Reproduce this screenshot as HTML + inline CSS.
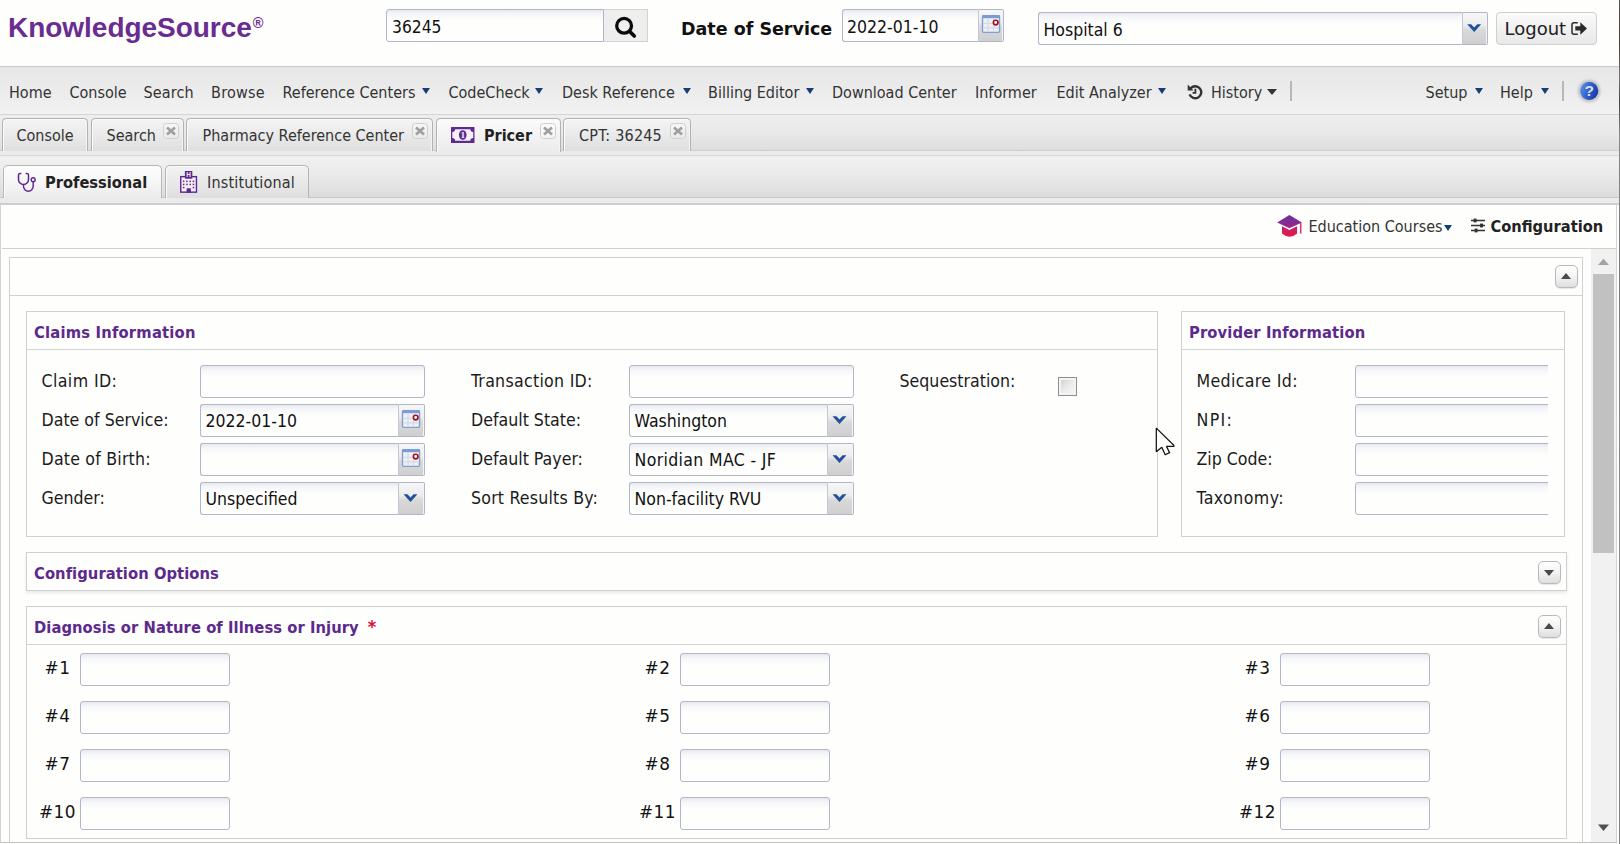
<!DOCTYPE html>
<html lang="en">
<head>
<meta charset="utf-8">
<title>KnowledgeSource - Pricer</title>
<style>
*{box-sizing:border-box;margin:0;padding:0}
html,body{width:1620px;height:844px;overflow:hidden;background:#fefefd}
body{position:relative;font-family:"DejaVu Sans Condensed","Liberation Sans",sans-serif;color:#333;font-size:16px}
.a{position:absolute;white-space:nowrap}
/* header */
#logo{left:8px;top:11px;font:bold 28px/34px "Liberation Sans",sans-serif;color:#6a2c91;letter-spacing:-.030px}
#logo sup{font-size:14.5px;font-weight:bold;position:relative;top:2px;left:1px;vertical-align:top;line-height:20px;letter-spacing:0}
.inp{position:absolute;height:33px;border:1px solid #b3b6ca;border-radius:3px;background:#fefefd linear-gradient(#e7e9ee 0,#f5f6f8 4px,#fefefd 11px);font:17.5px/31px "DejaVu Sans Condensed","Liberation Sans",sans-serif;color:#111;padding-left:4.500px;padding-top:1px;white-space:nowrap;overflow:hidden}
.inp.t{border-radius:3px 0 0 3px;border-right-color:#c4c6d6}
.trg{position:absolute;width:26px;height:33px;border:1px solid #b3b6ca;border-left:0;border-radius:0 2px 2px 0;background:linear-gradient(#f7f7f7 0,#ececec 40%,#d9d9d9 55%,#cfcfcf 100%);box-shadow:inset -1px 0 0 #f4f4f4}
.trg svg{position:absolute;left:0;top:0}
#hdrline{left:0;top:66px;width:1619px;height:1px;background:#c9c9c9}
/* nav */
#nav{left:0;top:67px;width:1619px;height:48px;background:linear-gradient(#e7e7e7 0,#ebebeb 45%,#f2f2f2 100%);border-bottom:1px solid #d4d4d4}
.n{position:absolute;top:82px;font-size:16px;line-height:22px;color:#333;white-space:nowrap}
.ar{position:absolute;top:88px;width:0;height:0;border-left:4.700px solid transparent;border-right:4.700px solid transparent;border-top:6.400px solid #153e72}
.sep{position:absolute;top:81px;width:1.500px;height:20px;background:#b9b7b0}
/* tab strips */
#ts1{left:0;top:115px;width:1619px;height:36px;background:linear-gradient(#eeeeee 0,#e9e9e9 50%,#dedede 100%);border-bottom:1px solid #cfcfcf}
#ts1b{left:0;top:151px;width:1619px;height:5px;background:#ebebeb;border-bottom:1px solid #d6d6d6}
#ts2{left:0;top:156px;width:1619px;height:42px;background:linear-gradient(#f1f1f1 0,#e9e9e9 50%,#dcdcdc 100%);border-bottom:1px solid #c8c8c8}
#ts2b{left:0;top:198px;width:1619px;height:7px;background:#ebebeb;border-bottom:2px solid #cdcdcd}
.tab{position:absolute;top:118px;height:33px;border:1px solid #b2b2b2;border-bottom:0;border-radius:4.500px 4.500px 0 0;background:linear-gradient(#f4f4f4 0,#ebebeb 45%,#dfdfdf 100%);box-shadow:inset 1px 1px 0 #fbfbfb,inset -1px 0 0 #f4f4f4;font-size:16px;line-height:22px;color:#333}
.tab.on{background:linear-gradient(#fbfbfb 0,#f3f3f3 50%,#ebebeb 100%);height:34px;font-weight:bold;color:#222}
.tab span{position:absolute;top:6px;margin-left:1px;white-space:nowrap}
.x{position:absolute;top:4px;width:16px;height:16px;margin-left:0;border:1px solid #cfcfcf;border-radius:3.500px;background:linear-gradient(rgba(255,255,255,.35),rgba(255,255,255,.1))}
.x svg{position:absolute;left:0;top:0}
.stab{position:absolute;top:165px;height:33px;border:1px solid #b4b4b4;border-bottom:0;border-radius:5px 5px 0 0;background:linear-gradient(#f2f2f2 0,#e9e9e9 50%,#dedede 100%);box-shadow:inset 1px 1px 0 #fafafa;font-size:16px;line-height:22px;color:#333}
.stab.on{background:linear-gradient(#fdfdfd 0,#f6f6f6 50%,#ebebeb 100%);height:33px;font-weight:bold;color:#222;border-color:#b8b8b8}
.stab span{position:absolute;top:6px;white-space:nowrap}

/* content */
#cleft{left:0;top:204px;width:1px;height:639px;background:#d2d2d2}
#cbot{left:0;top:842px;width:1619px;height:1px;background:#c2c2c2}
#tbline{left:2px;top:248px;width:1615px;height:1px;background:#d0d0d0}
.tb{position:absolute;top:216px;font-size:16px;line-height:22px;color:#333;white-space:nowrap}
#panel{left:9px;top:257px;width:1574px;height:585px;border:1px solid #d0d0d0;border-bottom:0;background:#fefefd}
#phdr{left:10px;top:295px;width:1572px;height:1px;background:#d0d0d0}
.tool{position:absolute;width:23px;height:23px;border:1px solid #b9b9b9;border-radius:5px;background:linear-gradient(#ffffff,#f3f3f3 50%,#dedede);box-shadow:0 1px 1px #e6e6e6}
.tool i{position:absolute;left:5px;width:0;height:0;border-left:5.500px solid transparent;border-right:5.500px solid transparent}
.tool i.up{top:7px;border-bottom:6px solid #4a4a4a}
.tool i.dn{top:8px;border-top:6px solid #4a4a4a}
.fs{position:absolute;border:1px solid #d0d0d0;background:#fefefd}
.fs .ttl{position:absolute;left:7px;top:10px;letter-spacing:.06px;font:bold 16.4px/22px "DejaVu Sans Condensed","Liberation Sans",sans-serif;color:#5c2a8c;white-space:nowrap}
.fs .ul{position:absolute;left:0;right:0;top:37px;height:1px;background:#d3d3d3}
.lb{position:absolute;font:17.6px/24px "DejaVu Sans Condensed","Liberation Sans",sans-serif;color:#1a1a1a;white-space:nowrap}
.dl{position:absolute;width:45px;text-align:center;letter-spacing:.5px;font:16.900px/24px "DejaVu Sans","Liberation Sans",sans-serif;color:#111;white-space:nowrap}
.dinp{width:150px;padding:0}
.cb{position:absolute;width:19px;height:19px;border:1px solid #8e8e8e;background:linear-gradient(135deg,#d2d2d2 10%,#ebebeb 50%,#f6f6f6 90%);box-shadow:inset 0 0 0 2px #f4f4f4}
/* scrollbar */
#sb{left:1591px;top:249px;width:25px;height:593px;background:#f1f1f1}
#sbth{left:1593px;top:274px;width:21px;height:279px;background:#c1c1c1}
</style>
</head>
<body>
<!-- ===== header ===== -->
<div class="a" id="logo">KnowledgeSource<sup>®</sup></div>
<div class="inp" style="left:386px;top:9px;width:218px;border-radius:3px 0 0 3px;padding-top:2px;padding-left:5px;font-size:17.300px">36245</div>
<div class="a" id="sbtn" style="left:604px;top:9px;width:44px;height:33px;background:#eeeeee;border:1px solid #d3d3d3;border-left:0">
<svg width="44" height="33" viewBox="0 0 44 33"><circle cx="20.100" cy="15.800" r="7.400" fill="none" stroke="#0a0a0a" stroke-width="3.300"/><path d="M25.600 21.400L30.300 26" stroke="#0a0a0a" stroke-width="3.600" stroke-linecap="round"/></svg>
</div>
<div class="a" style="left:681px;top:16.500px;font:bold 17.500px/24px 'DejaVu Sans','Liberation Sans',sans-serif;color:#111">Date of Service</div>
<div class="inp t" style="left:842px;top:9px;width:137px;padding-top:2px;padding-left:4px">2022-01-10</div>
<div class="trg" style="left:979px;top:9px;width:25px"><svg width="25" height="33" viewBox="0 0 25 33"><rect x="3.500" y="5.600" width="17" height="16.800" rx="1.300" fill="#eef0f5" stroke="#7f9fd6" stroke-width="1.400"/><rect x="3.300" y="5" width="17.400" height="3.200" fill="#7b9bd4"/><path d="M9 9V22M14.500 9V22M4.200 13.400H19.800M4.200 17.800H19.800" stroke="#d5d9e6" stroke-width="1.200"/><circle cx="16.700" cy="12.500" r="2.300" fill="#fff" stroke="#a30f14" stroke-width="1.650"/></svg></div>
<div class="inp t" style="left:1038px;top:12px;width:425px;padding-top:2px">Hospital 6</div>
<div class="trg" style="left:1463px;top:12px;width:25px"><svg width="25" height="33" viewBox="0 0 25 33"><g transform="translate(-1.800 0)"><path d="M6 11.300H9.900L13 14.600L16.100 11.300H20L13 18.900Z" fill="#23509b"/></g></svg></div>
<div class="a" id="logout" style="left:1496px;top:12px;width:101px;height:33px;border:1px solid #cfcfcf;border-radius:4px;background:linear-gradient(#fbfbfb,#f1f1f1 50%,#e9e9e9);font:18px/32px 'DejaVu Sans','Liberation Sans',sans-serif;color:#222;padding-left:7.500px">Logout
<svg class="a" style="left:74px;top:9px" width="17" height="14" viewBox="0 0 17 14"><path d="M6.800 .800H3Q1 .800 1 2.800V10.200Q1 12.200 3 12.200H6.800" fill="none" stroke="#2a2a2a" stroke-width="1.500"/><path d="M4.300 4.200H9.300V.300L16 6.400L9.300 12.700V8.600H4.300Z" fill="#2a2a2a"/></svg>
</div>
<div class="a" id="hdrline"></div>

<!-- ===== nav ===== -->
<div class="a" id="nav"></div>
<div class="n" style="left:9px">Home</div>
<div class="n" style="left:69.5px">Console</div>
<div class="n" style="left:143.500px;letter-spacing:.15px">Search</div>
<div class="n" style="left:211px;letter-spacing:.25px">Browse</div>
<div class="n" style="left:282.5px">Reference Centers</div><i class="ar" style="left:422px"></i>
<div class="n" style="left:448.5px">CodeCheck</div><i class="ar" style="left:535px"></i>
<div class="n" style="left:562px">Desk Reference</div><i class="ar" style="left:682.5px"></i>
<div class="n" style="left:708px">Billing Editor</div><i class="ar" style="left:806px"></i>
<div class="n" style="left:832px">Download Center</div>
<div class="n" style="left:975px">Informer</div>
<div class="n" style="left:1056.5px">Edit Analyzer</div><i class="ar" style="left:1158px"></i>
<svg class="a" style="left:1187px;top:84px" width="16" height="16" viewBox="0 0 16 16"><path d="M3.700 4.300A6 6 0 1 1 2.600 10.300" fill="none" stroke="#333" stroke-width="2.400"/><path d="M0.700 .600V6.400H6.500Z" fill="#333"/><path d="M8.400 4.700V8.800H5.600" fill="none" stroke="#333" stroke-width="1.800"/></svg>
<div class="n" style="left:1211px">History</div><i class="ar" style="left:1267px;top:89px;border-top-color:#333;border-left-width:5px;border-right-width:5px;border-top-width:6px"></i>
<i class="sep" style="left:1290px"></i>
<div class="n" style="left:1425.5px">Setup</div><i class="ar" style="left:1474.5px"></i>
<div class="n" style="left:1500px">Help</div><i class="ar" style="left:1540.5px"></i>
<i class="sep" style="left:1562px"></i>
<svg class="a" style="left:1575px;top:77px" width="28" height="28" viewBox="0 0 28 28"><defs><linearGradient id="hg" x1="0" y1=".3" x2="1" y2=".7"><stop offset="0" stop-color="#5d8fe6"/><stop offset=".5" stop-color="#2d5fcb"/><stop offset="1" stop-color="#16379f"/></linearGradient><filter id="hb" x="-30%" y="-30%" width="160%" height="160%"><feGaussianBlur stdDeviation=".9"/></filter></defs><circle cx="14.200" cy="14" r="11.300" fill="#c4c4c8" filter="url(#hb)"/><circle cx="14.200" cy="13.900" r="9.100" fill="url(#hg)"/><text x="14.300" y="19.400" text-anchor="middle" font-family="Liberation Sans,sans-serif" font-weight="bold" font-size="15.500" fill="#dfe0ea">?</text></svg>

<!-- ===== tab strips ===== -->
<div class="a" id="ts1"></div><div class="a" id="ts1b"></div>
<div class="a" id="ts2"></div><div class="a" id="ts2b"></div>

<!-- top tabs -->
<div class="tab" style="left:2px;width:86px"><span style="left:12.5px">Console</span></div>
<div class="tab" style="left:91px;width:93px"><span style="left:13.5px">Search</span><i class="x" style="left:71px"><svg width="14" height="14" viewBox="0 0 14 14"><path d="M3 3.400L11 10.600M11 3.400L3 10.600" stroke="#a0a0a0" stroke-width="2.700"/></svg></i></div>
<div class="tab" style="left:186px;width:247px"><span style="left:14.5px">Pharmacy Reference Center</span><i class="x" style="left:225px"><svg width="14" height="14" viewBox="0 0 14 14"><path d="M3 3.400L11 10.600M11 3.400L3 10.600" stroke="#a0a0a0" stroke-width="2.700"/></svg></i></div>
<div class="tab on" style="left:436px;width:125px"><svg class="a" style="left:14px;top:8px" width="23.500" height="16" viewBox="0 0 24 17" preserveAspectRatio="none"><rect x="0" y="0" width="24" height="17" rx=".6" fill="#5e2a93"/><path d="M4.200 2.300H19.800A2.900 2.900 0 0 0 22.700 5.200V11.800A2.900 2.900 0 0 0 19.800 14.700H4.200A2.900 2.900 0 0 0 1.300 11.800V5.200A2.900 2.900 0 0 0 4.200 2.300Z" fill="#f4f1f7"/><ellipse cx="12" cy="8.500" rx="3.900" ry="5.100" fill="#5e2a93"/><text x="12.100" y="11.900" text-anchor="middle" font-family="Liberation Serif,serif" font-weight="bold" font-size="9.500" fill="#f4f1f7">1</text></svg><span style="left:46px">Pricer</span><i class="x" style="left:103px"><svg width="14" height="14" viewBox="0 0 14 14"><path d="M3 3.400L11 10.600M11 3.400L3 10.600" stroke="#a0a0a0" stroke-width="2.700"/></svg></i></div>
<div class="tab" style="left:563px;width:128px"><span style="left:14px;letter-spacing:.2px">CPT: 36245</span><i class="x" style="left:106px"><svg width="14" height="14" viewBox="0 0 14 14"><path d="M3 3.400L11 10.600M11 3.400L3 10.600" stroke="#a0a0a0" stroke-width="2.700"/></svg></i></div>
<!-- sub tabs -->
<div class="stab on" style="left:3px;width:159px"><svg class="a" style="left:13px;top:6px" width="20" height="21" viewBox="0 0 20 21"><path d="M3.700 1.500Q1.500 1.100 1.500 3.200V7.500A5 5 0 0 0 11.500 7.500V3.200Q11.500 1.100 9.300 1.500" fill="none" stroke="#5e2590" stroke-width="1.500" stroke-linecap="round"/><path d="M6.500 12.500V14.300A4.850 4.850 0 0 0 16.200 14.300V9.700" fill="none" stroke="#5e2590" stroke-width="1.450"/><circle cx="16.200" cy="7.700" r="1.950" fill="none" stroke="#5e2590" stroke-width="1.400"/></svg><span style="left:41px;font-size:16.300px">Professional</span></div>
<div class="stab" style="left:165px;width:144px"><svg class="a" style="left:14px;top:5px" width="19" height="23" viewBox="0 0 19 23"><rect x=".750" y="5.650" width="15.700" height="15.500" fill="#f3f0f7" stroke="#5e2590" stroke-width="1.400"/><rect x="4.900" y="0" width="7.400" height="7.700" fill="#5e2590"/><text x="8.600" y="6" text-anchor="middle" font-family="Liberation Sans,sans-serif" font-weight="bold" font-size="6.400" fill="#f3f0f7">H</text><g fill="#5e2590"><rect x="2.900" y="9.600" width="1.500" height="1.500"/><rect x="6.200" y="9.600" width="1.500" height="1.500"/><rect x="9.500" y="9.600" width="1.500" height="1.500"/><rect x="12.700" y="9.600" width="1.500" height="1.500"/><rect x="2.900" y="12.700" width="1.500" height="1.500"/><rect x="6.200" y="12.700" width="1.500" height="1.500"/><rect x="9.500" y="12.700" width="1.500" height="1.500"/><rect x="12.700" y="12.700" width="1.500" height="1.500"/><rect x="2.900" y="15.800" width="1.500" height="1.500"/><rect x="12.700" y="15.800" width="1.500" height="1.500"/><rect x="6.600" y="17.300" width="4.300" height="4.500"/></g></svg><span style="left:41px;letter-spacing:.18px">Institutional</span></div>

<!-- ===== content ===== -->
<div class="a" id="cleft"></div><div class="a" id="cbot"></div>
<svg class="a" style="left:1276px;top:213px" width="28" height="27" viewBox="0 0 28 27"><defs><linearGradient id="gc" gradientUnits="userSpaceOnUse" x1="0" y1="2" x2="0" y2="24"><stop offset="0" stop-color="#6a30a4"/><stop offset=".5" stop-color="#92288b"/><stop offset=".68" stop-color="#cf2060"/><stop offset="1" stop-color="#ea1540"/></linearGradient></defs><path d="M13.400 2L25.900 9.500L13.400 15.300L1.200 9.500Z" fill="url(#gc)"/><path d="M6 13.300L13.400 16.900L21.100 13.300V20.400Q13.500 27 6 20.400Z" fill="url(#gc)"/><path d="M24.700 10V20.600" stroke="#d33a7c" stroke-width="1.600"/></svg>
<div class="tb" style="left:1308.500px">Education Courses</div><i class="ar" style="left:1444px;top:224.500px"></i>
<svg class="a" style="left:1470px;top:217px" width="16" height="16" viewBox="0 0 16 16"><path d="M1 3.500H15M1 8.500H15M1 13.500H15" stroke="#333" stroke-width="1.600"/><rect x="3.600" y="1.600" width="3" height="3.800" fill="#333"/><rect x="10" y="6.600" width="3" height="3.800" fill="#333"/><rect x="4.600" y="11.600" width="3" height="3.800" fill="#333"/></svg>
<div class="tb" style="left:1490.500px;font-weight:bold;font-size:16.300px;color:#222">Configuration</div>
<div class="a" id="tbline"></div>

<div class="a" id="panel"></div><div class="a" id="phdr"></div>
<div class="tool" style="left:1555px;top:265px"><i class="up"></i></div>

<!-- Claims Information -->
<div class="fs" style="left:26px;top:311px;width:1132px;height:226px"><div class="ttl" style="letter-spacing:.2px">Claims Information</div><div class="ul"></div></div>
<div class="lb" style="left:41.500px;top:369px;letter-spacing:0.4px">Claim ID:</div>
<div class="lb" style="left:41.500px;top:408px">Date of Service:</div>
<div class="lb" style="left:41.500px;top:447px;letter-spacing:0.2px">Date of Birth:</div>
<div class="lb" style="left:41.500px;top:486px">Gender:</div>
<div class="inp" style="left:200px;top:365px;width:225px"></div>
<div class="inp t" style="left:200px;top:404px;width:199px">2022-01-10</div><div class="trg" style="left:399px;top:404px"><svg width="25" height="33" viewBox="0 0 25 33"><rect x="3.500" y="5.600" width="17" height="16.800" rx="1.300" fill="#eef0f5" stroke="#7f9fd6" stroke-width="1.400"/><rect x="3.300" y="5" width="17.400" height="3.200" fill="#7b9bd4"/><path d="M9 9V22M14.500 9V22M4.200 13.400H19.800M4.200 17.800H19.800" stroke="#d5d9e6" stroke-width="1.200"/><circle cx="16.700" cy="12.500" r="2.300" fill="#fff" stroke="#a30f14" stroke-width="1.650"/></svg></div>
<div class="inp t" style="left:200px;top:443px;width:199px"></div><div class="trg" style="left:399px;top:443px"><svg width="25" height="33" viewBox="0 0 25 33"><rect x="3.500" y="5.600" width="17" height="16.800" rx="1.300" fill="#eef0f5" stroke="#7f9fd6" stroke-width="1.400"/><rect x="3.300" y="5" width="17.400" height="3.200" fill="#7b9bd4"/><path d="M9 9V22M14.500 9V22M4.200 13.400H19.800M4.200 17.800H19.800" stroke="#d5d9e6" stroke-width="1.200"/><circle cx="16.700" cy="12.500" r="2.300" fill="#fff" stroke="#a30f14" stroke-width="1.650"/></svg></div>
<div class="inp t" style="left:200px;top:482px;width:199px">Unspecified</div><div class="trg" style="left:399px;top:482px"><svg width="25" height="33" viewBox="0 0 25 33"><g transform="translate(-1.500 0)"><path d="M6 11.300H9.900L13 14.600L16.100 11.300H20L13 18.900Z" fill="#23509b"/></g></svg></div>

<div class="lb" style="left:471px;top:369px;letter-spacing:0.28px">Transaction ID:</div>
<div class="lb" style="left:471px;top:408px">Default State:</div>
<div class="lb" style="left:471px;top:447px">Default Payer:</div>
<div class="lb" style="left:471px;top:486px;letter-spacing:0.2px">Sort Results By:</div>
<div class="inp" style="left:629px;top:365px;width:225px"></div>
<div class="inp t" style="left:629px;top:404px;width:199px">Washington</div><div class="trg" style="left:828px;top:404px"><svg width="25" height="33" viewBox="0 0 25 33"><g transform="translate(-1.500 0)"><path d="M6 11.300H9.900L13 14.600L16.100 11.300H20L13 18.900Z" fill="#23509b"/></g></svg></div>
<div class="inp t" style="left:629px;top:443px;width:199px;letter-spacing:.36px">Noridian MAC - JF</div><div class="trg" style="left:828px;top:443px"><svg width="25" height="33" viewBox="0 0 25 33"><g transform="translate(-1.500 0)"><path d="M6 11.300H9.900L13 14.600L16.100 11.300H20L13 18.900Z" fill="#23509b"/></g></svg></div>
<div class="inp t" style="left:629px;top:482px;width:199px">Non-facility RVU</div><div class="trg" style="left:828px;top:482px"><svg width="25" height="33" viewBox="0 0 25 33"><g transform="translate(-1.500 0)"><path d="M6 11.300H9.900L13 14.600L16.100 11.300H20L13 18.900Z" fill="#23509b"/></g></svg></div>

<div class="lb" style="left:899.500px;top:369px">Sequestration:</div>
<div class="cb" style="left:1058px;top:377px"></div>

<!-- Provider Information -->
<div class="fs" style="left:1181px;top:311px;width:384px;height:226px;overflow:hidden"><div class="ttl" style="letter-spacing:.13px">Provider Information</div><div class="ul"></div>
<div class="inp" style="left:173px;top:53px;width:230px"></div>
<div class="inp" style="left:173px;top:92px;width:230px"></div>
<div class="inp" style="left:173px;top:131px;width:230px"></div>
<div class="inp" style="left:173px;top:170px;width:230px"></div>
<div class="a" style="left:366px;top:40px;width:17px;height:180px;background:#fefefd"></div>
</div>
<div class="lb" style="left:1196.500px;top:369px;letter-spacing:0.35px">Medicare Id:</div>
<div class="lb" style="left:1196.500px;top:408px;letter-spacing:1.3px">NPI:</div>
<div class="lb" style="left:1196.500px;top:447px">Zip Code:</div>
<div class="lb" style="left:1196.500px;top:486px;letter-spacing:0.45px">Taxonomy:</div>

<!-- Configuration Options -->
<div class="fs" style="left:26px;top:552px;width:1541px;height:39px;box-shadow:0 2px 3px #e9e9e9"><div class="ttl">Configuration Options</div></div>
<div class="tool" style="left:1538px;top:561px"><i class="dn"></i></div>

<!-- Diagnosis -->
<div class="fs" style="left:26px;top:606px;width:1541px;height:233px"><div class="ttl">Diagnosis or Nature of Illness or Injury<span style="color:#d80f3e;padding-left:9px;font-size:18px;line-height:0;position:relative;top:-.500px">*</span></div><div class="ul"></div></div>
<div class="tool" style="left:1538px;top:615px"><i class="up"></i></div>
<div class="dl" style="left:35px;top:656px">#1</div><div class="inp dinp" style="left:80px;top:653px"></div>
<div class="dl" style="left:635px;top:656px">#2</div><div class="inp dinp" style="left:680px;top:653px"></div>
<div class="dl" style="left:1235px;top:656px">#3</div><div class="inp dinp" style="left:1280px;top:653px"></div>
<div class="dl" style="left:35px;top:704px">#4</div><div class="inp dinp" style="left:80px;top:701px"></div>
<div class="dl" style="left:635px;top:704px">#5</div><div class="inp dinp" style="left:680px;top:701px"></div>
<div class="dl" style="left:1235px;top:704px">#6</div><div class="inp dinp" style="left:1280px;top:701px"></div>
<div class="dl" style="left:35px;top:752px">#7</div><div class="inp dinp" style="left:80px;top:749px"></div>
<div class="dl" style="left:635px;top:752px">#8</div><div class="inp dinp" style="left:680px;top:749px"></div>
<div class="dl" style="left:1235px;top:752px">#9</div><div class="inp dinp" style="left:1280px;top:749px"></div>
<div class="dl" style="left:35px;top:800px">#10</div><div class="inp dinp" style="left:80px;top:797px"></div>
<div class="dl" style="left:635px;top:800px">#11</div><div class="inp dinp" style="left:680px;top:797px"></div>
<div class="dl" style="left:1235px;top:800px">#12</div><div class="inp dinp" style="left:1280px;top:797px"></div>

<!-- scrollbar -->
<div class="a" id="sb"></div><div class="a" id="sbth"></div>
<svg class="a" style="left:1591px;top:249px" width="25" height="592" viewBox="0 0 25 592"><path d="M7 16H18L12.500 9.800Z" fill="#a3a3a3"/><path d="M7 575.500H18L12.500 582Z" fill="#505050"/></svg>
<!-- mouse cursor -->
<svg class="a" style="left:1154px;top:426px" width="24" height="32" viewBox="0 0 24 32"><path d="M2.300 2.100V25.700L7.800 21.200L11.200 28.700L15.600 26.600L12.500 20.400H19.800V19.300Z" fill="#fefefd" stroke="#111" stroke-width="1.250" stroke-linejoin="miter" stroke-miterlimit="1.500"/></svg>
<!-- right window edge -->
<div class="a" style="left:1616px;top:204px;width:1px;height:638px;background:#d4d4d4"></div><div class="a" style="left:1617px;top:205px;width:2px;height:639px;background:#fefefd"></div><div class="a" style="left:1619px;top:0;width:1px;height:844px;background:linear-gradient(#555 0,#4a3a36 5%,#777 9%,#444 12%,#8a8a8a 16%,#7a7a7a 30%,#8c8c8c 60%,#808080 100%)"></div>


</body>
</html>
